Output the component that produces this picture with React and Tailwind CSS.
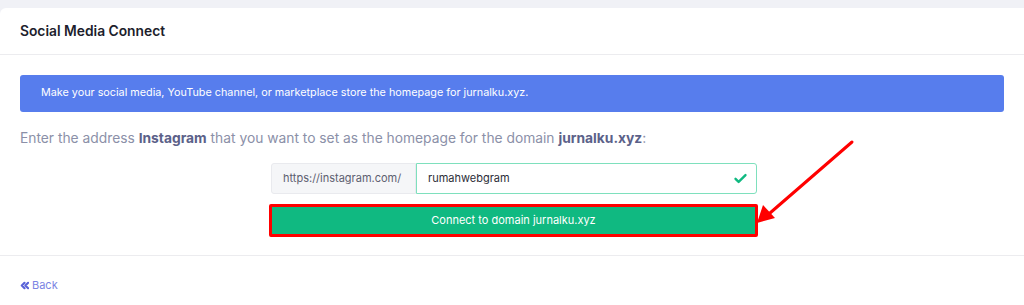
import React from "react";

export default function App() {
  return (
    <div className="relative h-[305px] w-[1024px] overflow-hidden bg-[#f0f1f6] pt-[8px] font-['Inter',sans-serif]">
      <div className="h-full rounded-tl-[6px] bg-white">
        {/* header */}
        <div className="flex h-[47px] items-center border-b border-[#ececef] px-5">
          <h1 className="text-[13.8px] font-semibold text-[#1d1e2c]">Social Media Connect</h1>
        </div>

        {/* body */}
        <div className="h-[201px] border-b border-[#ececef] px-5 pt-[20px]">
          <div className="flex h-[37px] items-center rounded-[3px] bg-[#577ded] px-[21px] text-[10.8px] text-white">
            Make your social media, YouTube channel, or marketplace store the homepage for jurnalku.xyz.
          </div>

          <p className="mt-[16px] text-[13.8px] leading-[20px] text-[#8b90a8]">
            Enter the address <span className="font-bold text-[#5b6189]">Instagram</span> that you want to set as the homepage for the domain{" "}
            <span className="font-bold text-[#5b6189]">jurnalku.xyz</span>:
          </p>

          <div className="ml-[251px] mt-[15px] w-[486px]">
            <div className="flex h-[31px]">
              <div className="flex w-[145px] items-center rounded-l-[3px] border border-[#e9eaee] bg-[#f5f6f8] px-[11px] text-[11px] text-[#5d6070]">
                https://instagram.com/
              </div>
              <div className="flex flex-1 items-center justify-between rounded-r-[3px] border border-[#7ee0bd] pl-[11px] pr-[8px] text-[11px] text-[#2c2d38]">
                <span>rumahwebgram</span>
                <svg width="15" height="15" viewBox="0 0 24 24" fill="none" stroke="#10b981" strokeWidth="3.8" strokeLinecap="round" strokeLinejoin="round">
                  <path d="M4 12.5l5 5L20 6.5" />
                </svg>
              </div>
            </div>
            <button
              type="button"
              className="-ml-[2px] mt-[10px] flex h-[33px] w-[489px] items-center justify-center rounded-[2px] border-[3px] border-[#ff0000] bg-[#10b981] text-[11px] text-white"
            >
              Connect to domain jurnalku.xyz
            </button>
          </div>
        </div>

        {/* footer */}
        <div className="px-5 pt-[21px]">
          <a href="#" className="flex items-center gap-[3px] text-[11px] text-[#7b83e3]">
            <svg width="9" height="9" viewBox="0 0 10 10" fill="none" stroke="#5a63d8" strokeWidth="2.4" strokeLinecap="round" strokeLinejoin="round">
              <path d="M5 2L2 5l3 3M9 2L6 5l3 3" />
            </svg>
            Back
          </a>
        </div>
      </div>

      {/* annotation arrow */}
      <svg className="pointer-events-none absolute left-0 top-0" width="1024" height="305">
        <line x1="852" y1="142" x2="770" y2="213" stroke="#ff0000" strokeWidth="3" strokeLinecap="round" />
        <polygon points="757,223 763,205 775,218" fill="#ff0000" />
      </svg>
    </div>
  );
}
